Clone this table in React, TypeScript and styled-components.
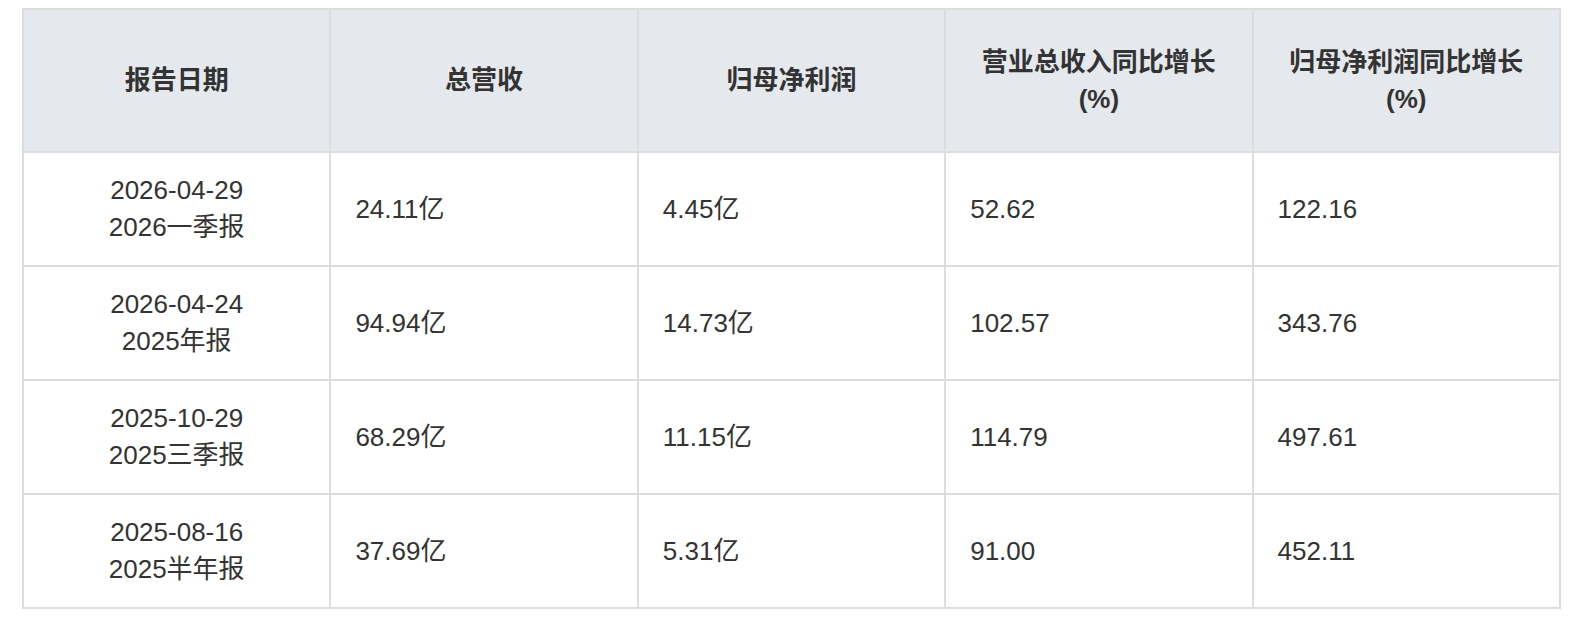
import React from "react";
import styled, { createGlobalStyle } from "styled-components";

const GlobalStyle = createGlobalStyle`
  body {
    margin: 0;
    background: #ffffff;
    font-family: "Liberation Sans", "Noto Sans CJK SC", sans-serif;
    color: #333333;
  }
`;

const Page = styled.div`
  padding: 8px 23px 0 22px;
`;

const Table = styled.table`
  width: 100%;
  table-layout: fixed;
  border-collapse: collapse;
  border: 2px solid #dddddd;
  font-size: 26px;
  line-height: 37px;
`;

const HeadCell = styled.th`
  height: 141px;
  padding: 0 24px;
  background: #e5e8ec;
  border: 2px solid #dddddd;
  font-weight: 600;
  color: #333333;
  text-align: center;
  vertical-align: middle;
`;

const Cell = styled.td<{ $center?: boolean }>`
  height: 112px;
  padding: 0 24px;
  border: 2px solid #dddddd;
  text-align: ${(p) => (p.$center ? "center" : "left")};
  vertical-align: middle;
  color: #333333;
`;

type Row = {
  date: string;
  period: string;
  revenue: string;
  profit: string;
  revenueGrowth: string;
  profitGrowth: string;
};

const rows: Row[] = [
  { date: "2026-04-29", period: "2026一季报", revenue: "24.11亿", profit: "4.45亿", revenueGrowth: "52.62", profitGrowth: "122.16" },
  { date: "2026-04-24", period: "2025年报", revenue: "94.94亿", profit: "14.73亿", revenueGrowth: "102.57", profitGrowth: "343.76" },
  { date: "2025-10-29", period: "2025三季报", revenue: "68.29亿", profit: "11.15亿", revenueGrowth: "114.79", profitGrowth: "497.61" },
  { date: "2025-08-16", period: "2025半年报", revenue: "37.69亿", profit: "5.31亿", revenueGrowth: "91.00", profitGrowth: "452.11" },
];

const App: React.FC = () => {
  return (
    <Page>
      <GlobalStyle />
      <Table>
        <thead>
          <tr>
            <HeadCell>报告日期</HeadCell>
            <HeadCell>总营收</HeadCell>
            <HeadCell>归母净利润</HeadCell>
            <HeadCell>
              营业总收入同比增长
              <br />
              (%)
            </HeadCell>
            <HeadCell>
              归母净利润同比增长
              <br />
              (%)
            </HeadCell>
          </tr>
        </thead>
        <tbody>
          {rows.map((row) => (
            <tr key={row.date}>
              <Cell $center>
                {row.date}
                <br />
                {row.period}
              </Cell>
              <Cell>{row.revenue}</Cell>
              <Cell>{row.profit}</Cell>
              <Cell>{row.revenueGrowth}</Cell>
              <Cell>{row.profitGrowth}</Cell>
            </tr>
          ))}
        </tbody>
      </Table>
    </Page>
  );
};

export default App;
